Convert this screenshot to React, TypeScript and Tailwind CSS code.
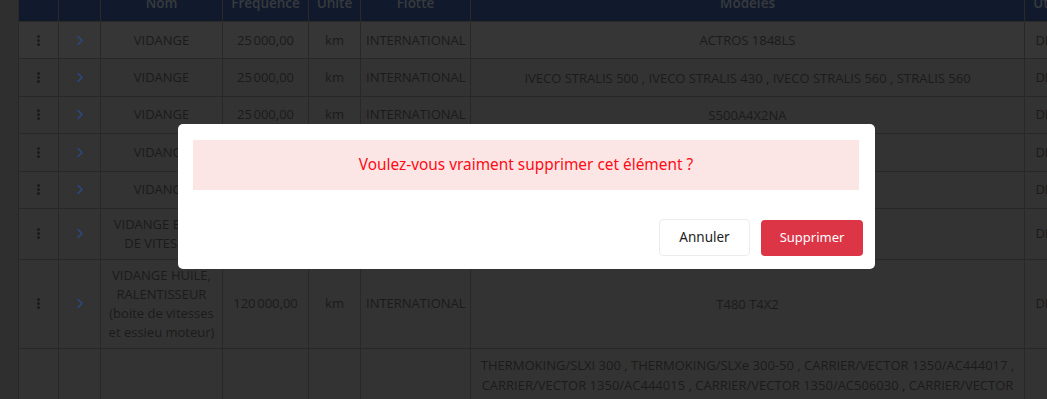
type Row = {
  nom: string
  freq: string
  unite: string
  flotte: string
  modeles: string
  ut: string
  actions?: boolean
}

const nbsp = "\u202f"

const rows: Row[] = [
  { nom: "VIDANGE", freq: `25${nbsp}000,00`, unite: "km", flotte: "INTERNATIONAL", modeles: "ACTROS 1848LS", ut: "DIRECTION", actions: true },
  {
    nom: "VIDANGE",
    freq: `25${nbsp}000,00`,
    unite: "km",
    flotte: "INTERNATIONAL",
    modeles: "IVECO STRALIS 500 , IVECO STRALIS 430 , IVECO STRALIS 560 , STRALIS 560",
    ut: "DIRECTION",
    actions: true,
  },
  { nom: "VIDANGE", freq: `25${nbsp}000,00`, unite: "km", flotte: "INTERNATIONAL", modeles: "S500A4X2NA", ut: "DIRECTION", actions: true },
  { nom: "VIDANGE", freq: `25${nbsp}000,00`, unite: "km", flotte: "INTERNATIONAL", modeles: "AXOR 1840LS", ut: "DIRECTION", actions: true },
  { nom: "VIDANGE", freq: `25${nbsp}000,00`, unite: "km", flotte: "INTERNATIONAL", modeles: "FH 460", ut: "DIRECTION", actions: true },
  { nom: "VIDANGE BOITE DE VITESSES", freq: `120${nbsp}000,00`, unite: "km", flotte: "INTERNATIONAL", modeles: "T480 T4X2", ut: "DIRECTION", actions: true },
  {
    nom: "VIDANGE HUILE, RALENTISSEUR (boite de vitesses et essieu moteur)",
    freq: `120${nbsp}000,00`,
    unite: "km",
    flotte: "INTERNATIONAL",
    modeles: "T480 T4X2",
    ut: "DIRECTION",
    actions: true,
  },
  {
    nom: "",
    freq: "",
    unite: "",
    flotte: "",
    modeles:
      "THERMOKING/SLXI 300 , THERMOKING/SLXe 300-50 , CARRIER/VECTOR 1350/AC444017 , CARRIER/VECTOR 1350/AC444015 , CARRIER/VECTOR 1350/AC506030 , CARRIER/VECTOR 1350/AC506029 , CARRIER/VECTOR 1350/AC420004 , CARRIER/VECTOR 1350/AC420003 , CARRIER/VECTOR 1550/AC506031 , CARRIER/VECTOR 1550/AC506032",
    ut: "",
  },
]

function Dots() {
  return (
    <span className="inline-flex flex-col items-center gap-[1px]">
      <span className="size-[3px] rounded-full bg-[#1b1b1b]" />
      <span className="size-[3px] rounded-full bg-[#1b1b1b]" />
      <span className="size-[3px] rounded-full bg-[#1b1b1b]" />
    </span>
  )
}

function Chevron() {
  return (
    <svg width="8" height="11" viewBox="0 0 8 11" fill="none">
      <polyline points="2,1.5 6,5.5 2,9.5" stroke="#2a4a86" strokeWidth="1.25" strokeLinecap="round" strokeLinejoin="round" />
    </svg>
  )
}

// table is seen through the modal backdrop, so colours are the dimmed ones
const td = "border border-[#282828] px-[5px] py-[6px] text-center align-middle"
const th = "border border-[#2c2927] font-semibold"

export default function App() {
  return (
    <div className="relative h-[399px] w-[1047px] overflow-hidden bg-[#2f2f2f] font-['Open_Sans',sans-serif]">
      <div className="-mt-[16px] pl-[18px]">
        <table className="w-[1130px] table-fixed border-collapse bg-[#333333] text-[13px] leading-[19px] text-[#1b1b1b]">
          <colgroup>
            <col className="w-[40px]" />
            <col className="w-[42px]" />
            <col className="w-[122px]" />
            <col className="w-[86px]" />
            <col className="w-[52px]" />
            <col className="w-[110px]" />
            <col className="w-[554px]" />
            <col className="w-[124px]" />
          </colgroup>
          <thead>
            <tr className="h-[37px] bg-[#111a2d] text-[13.5px] text-[#383a3e]">
              <th className={th} />
              <th className={th} />
              <th className={th}>Nom</th>
              <th className={th}>Fréquence</th>
              <th className={th}>Unité</th>
              <th className={th}>Flotte</th>
              <th className={th}>Modèles</th>
              <th className={`${th} pr-[38px]`}>Utilisateur</th>
            </tr>
          </thead>
          <tbody>
            {rows.map((r, i) => (
              <tr key={i} className={i === 0 ? "bg-[#363636]" : ""}>
                <td className={td}>
                  {r.actions && (
                    <span className="flex h-[24.4px] items-center justify-center">
                      <Dots />
                    </span>
                  )}
                </td>
                <td className={td}>
                  {r.actions && (
                    <span className="flex items-center justify-center">
                      <Chevron />
                    </span>
                  )}
                </td>
                <td className={td}>{r.nom}</td>
                <td className={td}>{r.freq}</td>
                <td className={td}>{r.unite}</td>
                <td className={td}>{r.flotte}</td>
                <td className={`${td} px-2 leading-[20px]`}>{r.modeles}</td>
                <td className={`${td} pr-[40px]`}>{r.ut}</td>
              </tr>
            ))}
          </tbody>
        </table>
      </div>

      <div className="absolute left-[178px] top-[124px] w-[697px] rounded-[5px] bg-white font-['Noto_Sans',sans-serif]">
        <div className="pl-[15px] pr-[16px] pt-[16px]">
          <div className="flex h-[50px] items-center justify-center bg-[#fbe6e5] text-[15.4px] text-[#ff0a14]">
            Voulez-vous vraiment supprimer cet élément ?
          </div>
        </div>
        <div className="flex items-center justify-end gap-[11px] px-[12px] pb-[13px] pt-[29px]">
          <button className="h-[37px] w-[91px] rounded-[4px] border border-[#ececec] bg-white text-[13.5px] text-[#1d1d1d]">
            Annuler
          </button>
          <button className="h-[36px] w-[102px] rounded-[4px] bg-[#dc3545] text-[13px] text-white">
            Supprimer
          </button>
        </div>
      </div>
    </div>
  )
}
